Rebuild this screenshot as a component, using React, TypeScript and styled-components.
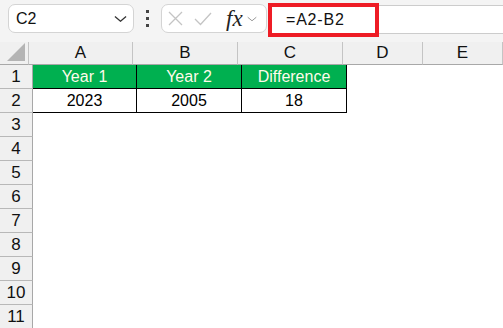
import React from "react";
import styled, { createGlobalStyle } from "styled-components";

const GlobalStyle = createGlobalStyle`
  body {
    margin: 0;
    background: #ffffff;
    font-family: "Liberation Sans", Arial, sans-serif;
    overflow: hidden;
  }
`;

const Page = styled.div`
  width: 503px;
  height: 328px;
  overflow: hidden;
  background: #ffffff;
`;

const TopBar = styled.div`
  height: 42px;
  box-sizing: border-box;
  background: #f4f4f4;
  display: flex;
  align-items: flex-start;
  padding: 4px 0 0 8px;
`;

const NameBox = styled.div`
  width: 126px;
  height: 29px;
  box-sizing: border-box;
  background: #fff;
  border: 1px solid #d4d4d4;
  border-radius: 7px;
  display: flex;
  align-items: center;
  justify-content: space-between;
  padding: 0 6px 0 7px;
  font-size: 16px;
  color: #111;
`;

const Dots = styled.div`
  width: 27px;
  height: 29px;
  display: flex;
  flex-direction: column;
  align-items: center;
  justify-content: center;
  gap: 4px;

  span {
    width: 3px;
    height: 3px;
    background: #444;
  }
`;

const FxGroup = styled.div`
  width: 106px;
  height: 29px;
  box-sizing: border-box;
  background: #fff;
  border: 1px solid #d4d4d4;
  border-radius: 7px;
  display: flex;
  align-items: center;
  padding: 0 0 0 6px;
  gap: 11px;
`;

const Fx = styled.span`
  font-family: "Liberation Serif", "Times New Roman", serif;
  font-style: italic;
  font-size: 23px;
  color: #222;
  margin-left: 3px;
  margin-right: -7px;
  line-height: 1;
`;

const FormulaInput = styled.div`
  position: relative;
  flex: 1;
  height: 29px;
  margin-left: 1px;
  margin-top: 1px;
  box-sizing: border-box;
  background: #fff;
  border-top: 1px solid #cccccc;
  border-bottom: 1px solid #cccccc;
  display: flex;
  align-items: center;
  padding-left: 18px;
  font-size: 16px;
  letter-spacing: 0.8px;
  color: #111;
`;

const Highlight = styled.div`
  position: absolute;
  left: 0;
  top: -3px;
  width: 111px;
  height: 34px;
  box-sizing: border-box;
  border: 4px solid #ee1c25;
`;

const Row = styled.div<{ $h: number }>`
  display: flex;
  height: ${(p) => p.$h}px;
`;

const Corner = styled.div`
  width: 33px;
  height: 23px;
  box-sizing: border-box;
  background: #f0f0f0;
  border-right: 1px solid #c4c4c4;
  border-bottom: 1px solid #a8a8a8;
  display: flex;
  align-items: flex-end;
  justify-content: flex-end;
  padding: 0 3px 3px 0;
`;

const ColHead = styled.div<{ $w: number }>`
  width: ${(p) => p.$w}px;
  flex-shrink: 0;
  height: 23px;
  box-sizing: border-box;
  background: #f0f0f0;
  border-right: 1px solid #c4c4c4;
  border-bottom: 1px solid #a8a8a8;
  display: flex;
  align-items: center;
  justify-content: center;
  font-size: 17px;
  color: #111;
`;

const RowHead = styled.div`
  width: 33px;
  flex-shrink: 0;
  box-sizing: border-box;
  background: #f0f0f0;
  border-right: 1px solid #a8a8a8;
  border-bottom: 1px solid #b8b8b8;
  display: flex;
  align-items: center;
  justify-content: center;
  font-size: 17px;
  color: #111;
`;

const Cell = styled.div<{ $w: number; $kind: "head" | "data" | "empty" }>`
  width: ${(p) => p.$w}px;
  flex-shrink: 0;
  box-sizing: border-box;
  display: flex;
  align-items: center;
  justify-content: center;
  font-size: 16px;
  background: ${(p) => (p.$kind === "head" ? "#00b050" : "#fff")};
  color: ${(p) => (p.$kind === "head" ? "#fffbea" : "#000")};
  border-right: ${(p) => (p.$kind === "empty" ? "none" : "1px solid #000")};
  border-bottom: ${(p) => (p.$kind === "empty" ? "none" : "1px solid #000")};
`;

const widths = [104, 105, 105, 80, 80];
const letters = ["A", "B", "C", "D", "E"];

const table: string[][] = [
  ["Year 1", "Year 2", "Difference"],
  ["2023", "2005", "18"],
];

const Chevron = ({ size, color }: { size: number; color: string }) => (
  <svg width={size} height={size * 0.6} viewBox="0 0 14 8">
    <path d="M1 1.5 L7 6.5 L13 1.5" fill="none" stroke={color} strokeWidth="1.4" />
  </svg>
);

const App: React.FC = () => {
  const rows = Array.from({ length: 11 }, (_, i) => i + 1);

  return (
    <Page>
      <GlobalStyle />
      <TopBar>
        <NameBox>
          <span>C2</span>
          <Chevron size={13} color="#333" />
        </NameBox>
        <Dots>
          <span />
          <span />
          <span />
        </Dots>
        <FxGroup>
          <svg width="15" height="15" viewBox="0 0 15 15">
            <path d="M1 1 L14 14 M14 1 L1 14" stroke="#c4c4c4" strokeWidth="1.3" fill="none" />
          </svg>
          <svg width="18" height="14" viewBox="0 0 18 14">
            <path d="M1 7 L6.5 12.5 L17 1" stroke="#c4c4c4" strokeWidth="1.3" fill="none" />
          </svg>
          <Fx>fx</Fx>
          <Chevron size={10} color="#9a9a9a" />
        </FxGroup>
        <FormulaInput>
          =A2-B2
          <Highlight />
        </FormulaInput>
      </TopBar>

      <Row $h={23}>
        <Corner>
          <svg width="18" height="18" viewBox="0 0 18 18">
            <path d="M18 0 L18 18 L0 18 Z" fill="#b4b4b4" />
          </svg>
        </Corner>
        {letters.map((l, i) => (
          <ColHead key={l} $w={widths[i]}>
            {l}
          </ColHead>
        ))}
      </Row>

      {rows.map((r) => {
        const data = table[r - 1];
        return (
          <Row key={r} $h={24}>
            <RowHead>{r}</RowHead>
            {widths.map((w, c) => {
              const inTable = data && c < 3;
              return (
                <Cell key={c} $w={w} $kind={inTable ? (r === 1 ? "head" : "data") : "empty"}>
                  {inTable ? data[c] : ""}
                </Cell>
              );
            })}
          </Row>
        );
      })}
    </Page>
  );
};

export default App;
